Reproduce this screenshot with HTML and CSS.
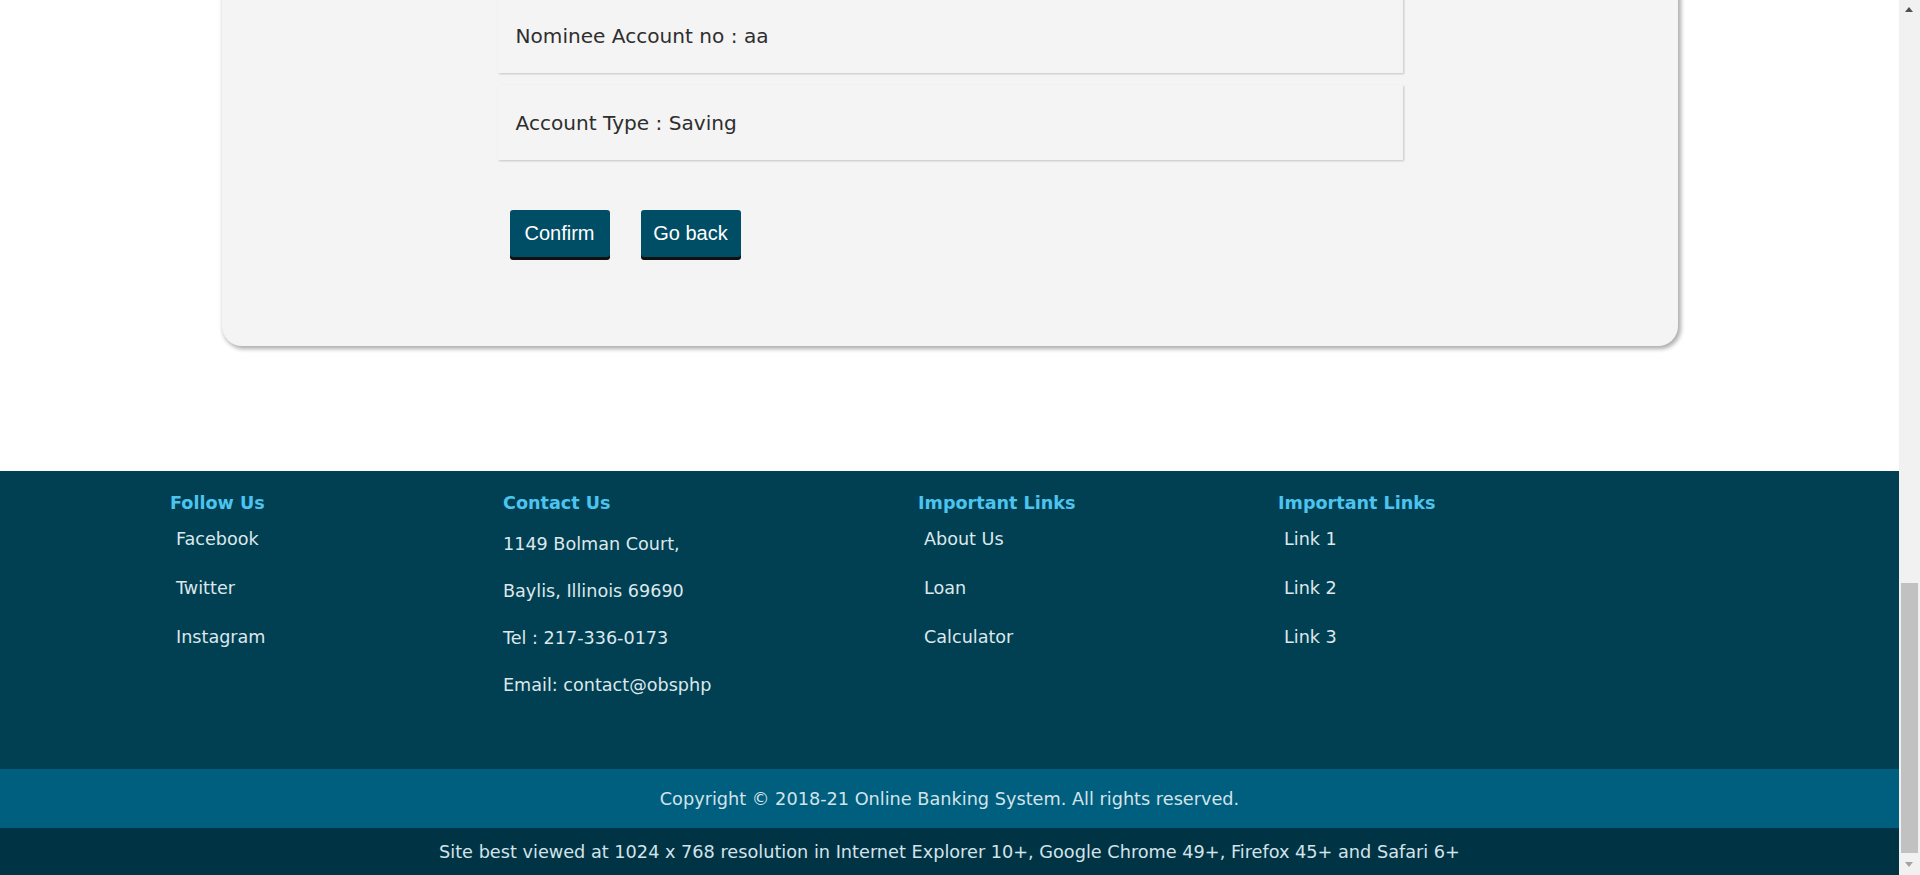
FILE: index.html
```html
<!DOCTYPE html>
<html lang="en">
<head>
<meta charset="utf-8">
<title>Confirm Details - Online Banking System</title>
<link rel="stylesheet" href="styles.css">
</head>
<body>
<div class="page">
  <main class="card">
    <div class="details">
      <div class="row">Nominee Account no : aa</div>
      <div class="row">Account Type : Saving</div>
      <div class="actions">
        <button class="btn" type="button">Confirm</button>
        <button class="btn" type="button">Go back</button>
      </div>
    </div>
  </main>

  <footer class="footer">
    <div class="footer-main">
      <div class="col col-follow">
        <h4 class="col-title">Follow Us</h4>
        <ul class="links">
          <li>Facebook</li>
          <li>Twitter</li>
          <li>Instagram</li>
        </ul>
      </div>
      <div class="col col-contact">
        <h4 class="col-title">Contact Us</h4>
        <ul class="contact">
          <li>1149 Bolman Court,</li>
          <li>Baylis, Illinois 69690</li>
          <li>Tel : 217-336-0173</li>
          <li>Email: contact@obsphp</li>
        </ul>
      </div>
      <div class="col col-imp">
        <h4 class="col-title">Important Links</h4>
        <ul class="links">
          <li>About Us</li>
          <li>Loan</li>
          <li>Calculator</li>
        </ul>
      </div>
      <div class="col col-imp2">
        <h4 class="col-title">Important Links</h4>
        <ul class="links">
          <li>Link 1</li>
          <li>Link 2</li>
          <li>Link 3</li>
        </ul>
      </div>
    </div>
    <div class="copyright">Copyright &copy; 2018-21 Online Banking System. All rights reserved.</div>
    <div class="bestview">Site best viewed at 1024 x 768 resolution in Internet Explorer 10+, Google Chrome 49+, Firefox 45+ and Safari 6+</div>
  </footer>
</div>

<div class="scrollbar" aria-hidden="true">
  <span class="sb-up"></span>
  <span class="sb-thumb"></span>
  <span class="sb-down"></span>
</div>
</body>
</html>
```

FILE: styles.css
```css
* { box-sizing: border-box; }

html, body {
  margin: 0;
  padding: 0;
  height: 875px;
  overflow: hidden;
  background: #ffffff;
}

body {
  font-family: "DejaVu Sans", Verdana, sans-serif;
}

.page {
  width: 1899px;
}

/* ---------- card ---------- */
.card {
  width: 1456px;
  margin: -14px auto 0;
  padding: 12px 0 89px 276px;
  background: #f4f4f4;
  border-radius: 0 0 20px 20px;
  box-shadow: 2px 2px 4px 1px rgba(0, 0, 0, 0.32);
}

.details {
  width: 905px;
  display: flex;
  flex-direction: column;
  gap: 12px;
}

.row {
  height: 75px;
  display: flex;
  align-items: center;
  padding: 0 18px;
  background: #f4f4f4;
  box-shadow: 1px 1px 2px rgba(0, 0, 0, 0.2);
  font-size: 20.1px;
  color: #2e2e2e;
}

.actions {
  display: flex;
  gap: 31px;
  margin-top: 38px;
  padding-left: 12px;
}

.btn {
  width: 100px;
  height: 47px;
  border: 0;
  border-radius: 3px;
  background: #004d66;
  color: #ffffff;
  font-family: "Liberation Sans", Arial, sans-serif;
  font-size: 20px;
  box-shadow: 0 3px 0 #101010;
  padding: 0;
  cursor: pointer;
}

/* ---------- footer ---------- */
.footer {
  margin-top: 125px;
}

.footer-main {
  background: #004052;
  height: 298px;
  padding: 22px 0 0 170px;
  display: grid;
  grid-template-columns: 333px 415px 360px 1fr;
  align-items: start;
}

.col-title {
  margin: 0;
  font-size: 17.6px;
  line-height: 20px;
  font-weight: bold;
  color: #4dc4f0;
}

.links,
.contact {
  list-style: none;
  margin: 0;
  padding: 0;
  font-size: 17.6px;
  color: #dde7ec;
}

.links {
  padding-left: 6px;
  margin-top: 1.5px;
}

.links li {
  height: 49px;
  line-height: 49px;
}

.contact {
  margin-top: 8px;
}

.contact li {
  height: 47px;
  line-height: 47px;
}

.copyright {
  height: 59px;
  background: #005f7e;
  color: #d3e3ea;
  font-size: 17.7px;
  display: flex;
  align-items: center;
  justify-content: center;
}

.bestview {
  height: 47px;
  background: #003344;
  color: #d3e3ea;
  font-size: 17.7px;
  display: flex;
  align-items: center;
  justify-content: center;
}

/* ---------- fake scrollbar (overlay) ---------- */
.scrollbar {
  position: fixed;
  top: 0;
  right: 0;
  width: 21px;
  height: 875px;
  background: #f1f1f1;
}

.sb-up,
.sb-down {
  position: absolute;
  left: 6px;
  width: 0;
  height: 0;
  border-left: 4.5px solid transparent;
  border-right: 4.5px solid transparent;
}

.sb-up {
  top: 7px;
  border-bottom: 5px solid #505050;
}

.sb-down {
  bottom: 8px;
  border-top: 5px solid #a3a3a3;
}

.sb-thumb {
  position: absolute;
  top: 583px;
  left: 2px;
  width: 17px;
  height: 270px;
  background: #c1c1c1;
}
```
